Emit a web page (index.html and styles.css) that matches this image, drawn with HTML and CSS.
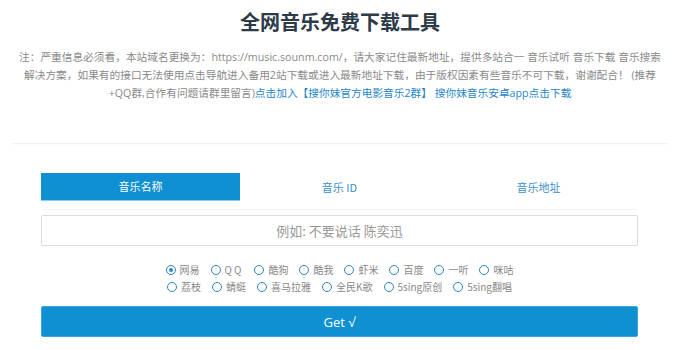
FILE: index.html
```html
<!DOCTYPE html>
<html lang="zh-CN">
<head>
<meta charset="utf-8">
<title>全网音乐免费下载工具</title>
<link rel="stylesheet" href="styles.css">
</head>
<body>
<header class="head">
  <h1 class="title">全网音乐免费下载工具</h1>
  <p class="notice">注：严重信息必须看，本站域名更换为：https://music.sounm.com/，请大家记住最新地址，提供多站合一 音乐试听 音乐下载 音乐搜索<br>解决方案，如果有的接口无法使用点击导航进入备用2站下载或进入最新地址下载，由于版权因素有些音乐不可下载，谢谢配合！ (推荐<br>+QQ群,合作有问题请群里留言)<a class="link" href="#">点击加入【搜你妹官方电影音乐2群】</a> <a class="link" href="#">搜你妹音乐安卓app点击下载</a></p>
</header>
<div class="divider"></div>
<main class="tool">
  <nav class="tabs">
    <span class="tab active">音乐名称</span>
    <span class="tab">音乐 ID</span>
    <span class="tab">音乐地址</span>
  </nav>
  <input class="query" type="text" placeholder="例如: 不要说话 陈奕迅">
  <div class="sources">
    <div class="row">
      <label class="src"><span class="dot on"></span>网易</label>
      <label class="src"><span class="dot"></span><span class="qq">QQ</span></label>
      <label class="src"><span class="dot"></span>酷狗</label>
      <label class="src"><span class="dot"></span>酷我</label>
      <label class="src"><span class="dot"></span>虾米</label>
      <label class="src"><span class="dot"></span>百度</label>
      <label class="src"><span class="dot"></span>一听</label>
      <label class="src"><span class="dot"></span>咪咕</label>
    </div>
    <div class="row">
      <label class="src"><span class="dot"></span>荔枝</label>
      <label class="src"><span class="dot"></span>蜻蜓</label>
      <label class="src"><span class="dot"></span>喜马拉雅</label>
      <label class="src"><span class="dot"></span>全民K歌</label>
      <label class="src"><span class="dot"></span>5sing原创</label>
      <label class="src"><span class="dot"></span>5sing翻唱</label>
    </div>
  </div>
  <button class="get" type="button">Get √</button>
</main>
</body>
</html>
```
FILE: styles.css
```css
* { box-sizing: border-box; }
html, body { margin: 0; padding: 0; background: #fff; }
body {
  font-family: "Open Sans", "Noto Sans CJK SC", sans-serif;
  color: #666;
}
.head { text-align: center; padding: 0 12px; }
.title {
  margin: 0;
  padding-top: 8px;
  font-size: 20px;
  line-height: 28px;
  font-weight: 700;
  color: #2d3a48;
  font-family: "Noto Sans CJK SC", sans-serif;
}
.notice {
  margin: 12px 0 0;
  font-size: 10.7px;
  line-height: 18px;
  color: #8a8a8a;
  white-space: nowrap;
}
.link { color: #1f86c8; text-decoration: none; }
.divider {
  margin: 41px 12px 0;
  height: 1px;
  background: #f1f1f1;
  box-shadow: 0 1px 2px rgba(0,0,0,0.03);
}
.tool {
  margin: 29px 42px 0 41px;
  display: flex;
  flex-direction: column;
}
.tabs {
  display: grid;
  grid-template-columns: 1fr 1fr 1fr;
  border-bottom: 1px solid #f2f5f8;
  padding-bottom: 8px;
}
.tab {
  height: 28px;
  line-height: 28px;
  text-align: center;
  font-size: 11px;
  color: #3a8fcf;
  font-family: "Noto Sans CJK SC", sans-serif;
}
.tab.active {
  background: #0e90d2;
  color: #fff;
  border-bottom: 1px solid #7fcdf2;
  line-height: 27px;
}
.query {
  margin-top: 5px;
  height: 31px;
  border: 1px solid #dcdcdc;
  border-radius: 2px;
  text-align: center;
  font-size: 13px;
  font-family: "Noto Sans CJK SC", sans-serif;
  color: #555;
  outline: none;
}
.query::placeholder { color: #999; }
.sources {
  margin-top: 16px;
  display: flex;
  flex-direction: column;
  align-items: center;
  gap: 1px;
}
.row { display: flex; gap: 11px; }
.src {
  display: flex;
  align-items: center;
  gap: 4px;
  font-size: 10px;
  line-height: 16px;
  color: #888;
  font-family: "Noto Sans CJK SC", sans-serif;
}
.qq { letter-spacing: 2px; }
.dot {
  width: 10px;
  height: 10px;
  border: 1.6px solid #2c85c4;
  border-radius: 50%;
  display: flex;
  align-items: center;
  justify-content: center;
}
.dot.on::after {
  content: "";
  width: 4px;
  height: 4px;
  border-radius: 50%;
  background: #2c85c4;
}
.get {
  margin-top: 11px;
  height: 31px;
  border: 1px solid #3aa6e0;
  border-radius: 2px;
  background: #0e90d2;
  color: #fff;
  font-size: 13px;
  font-family: "Open Sans", sans-serif;
}
```
